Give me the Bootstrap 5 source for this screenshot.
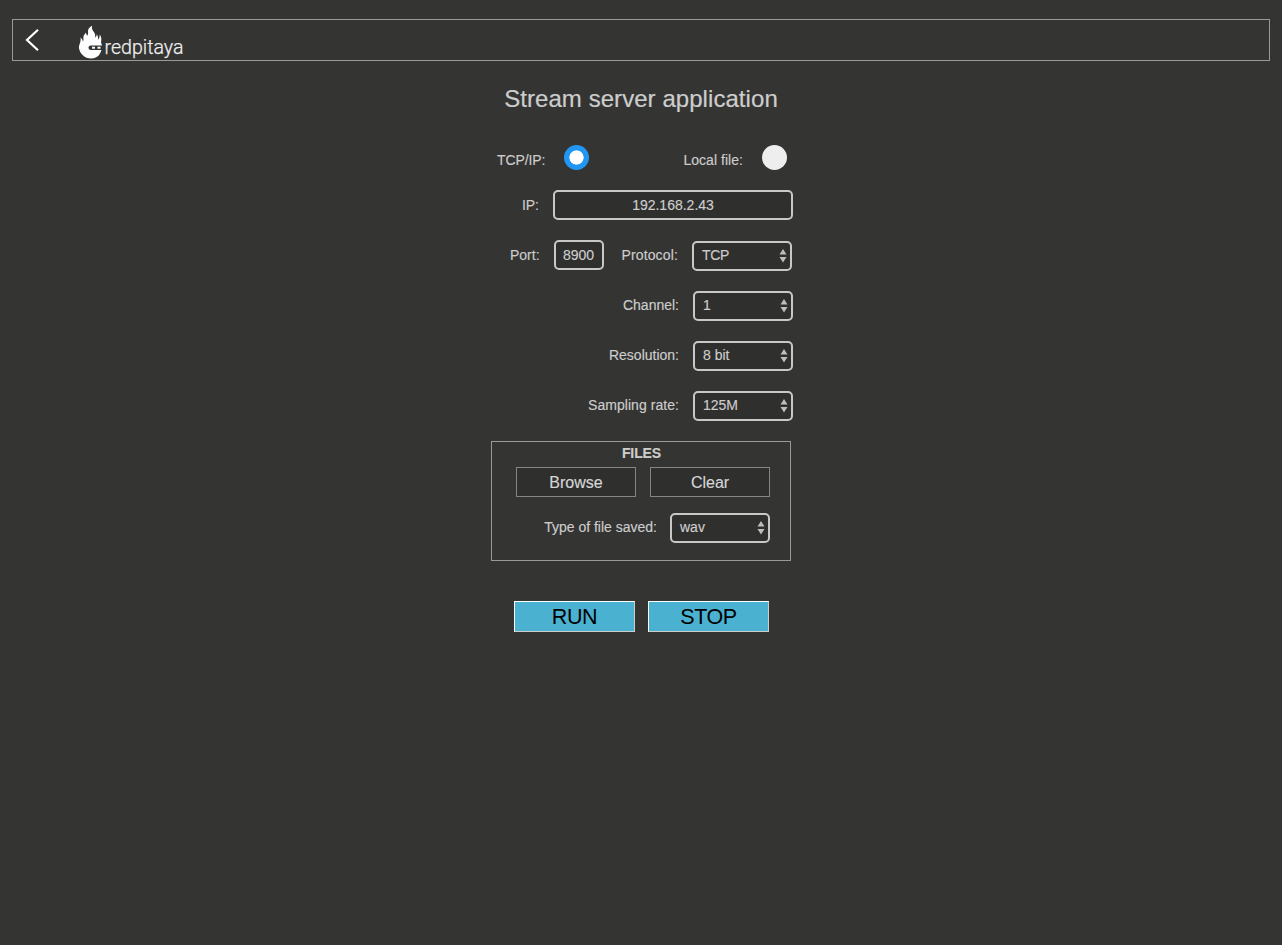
<!DOCTYPE html>
<html lang="en">
<head>
<meta charset="utf-8">
<meta name="viewport" content="width=device-width, initial-scale=1">
<title>Stream server application</title>
<link href="https://cdn.jsdelivr.net/npm/bootstrap@5.3.0/dist/css/bootstrap.min.css" rel="stylesheet">
<style>
body{background:#343432;color:#cdcdcd;font-family:"Liberation Sans",Arial,sans-serif;font-size:14px;line-height:20px;min-height:100vh}
.topbar{margin:19px 12px 0;height:42px;border:1px solid #999995}
.back{margin-left:12px}
.brand{margin-left:39px}
.brand svg{overflow:visible}
.panel{width:302px;margin-left:491px}
.title{font-size:24px;line-height:30px;margin:23px 2px 0 0;letter-spacing:.06px;font-weight:400;-webkit-text-stroke:.2px}
.modes{height:26px;margin-top:31px}
.modes label,.line,.files{-webkit-text-stroke:.15px}
.dot{width:25px;height:25px;border-radius:50%;background:#eee;border:0;margin:0;appearance:none;flex:none}
.dot:checked{background:radial-gradient(circle,#fff 0 6.8px,#2196f3 7.4px)}
.line{height:30px;margin-bottom:20px}
.field{height:30px;padding:0;border:2px solid #c8c8c6;border-radius:5px;background:#2f2f2e;color:#cdcdcd;font-size:14px;line-height:26px;text-align:center;box-shadow:none}
.pick{width:100px;height:30px;border:2px solid #c8c8c6;border-radius:5px;background:#2f2f2e;padding:0 3px 0 8px;line-height:24px}
.pick svg{margin-top:1px}
.files{width:300px;height:120px;border:1px solid #999995;margin-top:21px}
.files-head{font-size:14px;line-height:16px;margin:3px 0 0 1px;letter-spacing:-.1px}
.flat{width:120px;height:30px;border:1px solid #858583;border-radius:0;background:#2f2f2e;color:#d6d6d6;font-size:16px;line-height:29px;padding:0}
.act{width:121px;height:31px;border:1px solid;border-color:#fff #ccc #ccc #fff;border-radius:0;background:#4ab2d0;color:#000;font-size:21.500px;line-height:31px;letter-spacing:-.4px;padding:0}
</style>
</head>
<body>
<header class="d-flex flex-column">
<nav class="topbar d-flex">
<a class="back d-block" href="#" aria-label="Back"><svg class="d-block" width="15" height="40" viewBox="0 0 15 40"><path d="M13 9.8 2 20 13 30.2" fill="none" stroke="#fff" stroke-width="2.2"/></svg></a>
<a class="brand d-block" href="#"><svg class="d-block" width="108" height="40" viewBox="79 20 108 40">
<path d="M80.600 37.500c1.500 1.200 2 2.300 2.200 4 .7-.7.700-1.500.6-2.500-.4-3 1-4.600 2.600-6.500.2 1.500.5 2.300 1.200 3.200 1-1.300 1-2.400.8-3.900-.3-2.700 1.500-4.800 4.200-6-.8 2.700.2 4.200 1.500 6 1.300 1.700 1.900 3.400 1.400 5.700 1.300-.7 1.600-1.700 1.500-3.300 1.700 2 1.700 3.600 1.200 5.600 1.500-1 2-2.700 1.800-5.200 1.800 2.200 1.900 4.200 1.600 6.200-.2 1.600-.2 2.400.6 3.600l.2 2c-.3 7-4.400 12-10.500 12-7 0-11.800-5-12.500-10.500-.4-3 2.100-5 1.600-10.400Z" fill="#fff"/>
<path d="M91 45.500H102.500v4.500H91q-2.600 0-2.600-2.250t2.600-2.250Z" fill="#343432"/><rect x="92" y="46.700" width="3" height="2" fill="#fff"/><rect x="97.500" y="46.700" width="3" height="2" fill="#fff"/>
<text x="104.500" y="54" textLength="79" lengthAdjust="spacingAndGlyphs" font-family="Roboto,sans-serif" font-weight="300" font-size="20.500" fill="#eee" stroke="#eee" stroke-width=".25">redpitaya</text></svg></a>
</nav>
</header>
<main class="panel">
<h1 class="title text-center">Stream server application</h1>
<div class="modes d-flex">
<label for="net" style="letter-spacing:-.1px;margin:5px 19px 0 6px">TCP/IP:</label><input class="dot" type="radio" id="net" name="mode" checked>
<label class="ms-auto" for="loc" style="letter-spacing:.04px;margin:5px 19px 0 0">Local file:</label><input class="dot" type="radio" id="loc" name="mode" style="margin-right:6px">
</div>
<form style="margin-top:19px">
<div class="line d-flex align-items-center justify-content-end"><label for="ip" style="margin-right:14px">IP:</label><input class="field form-control" style="width:240px" id="ip" value="192.168.2.43"></div>
<div class="line d-flex align-items-center">
<label for="port" style="margin:0 14px 0 19px">Port:</label><input class="field form-control" style="width:50px" id="port" value="8900">
<label class="ms-auto" style="margin-right:14px;letter-spacing:.15px">Protocol:</label><div class="pick d-flex justify-content-between" style="margin:2px 1px 0 0"><span style="letter-spacing:-.3px">TCP</span><svg width="8" height="24" viewBox="0 0 8 24"><path d="M0.500 10.500 4 5l3.500 5.500zM.5 13 4 18.500 7.500 13z" fill="#bdbdbb"/></svg></div>
</div>
<div class="line d-flex justify-content-end"><label style="margin:5px 14px 0 0">Channel:</label><div class="pick d-flex justify-content-between" style="margin-top:1px"><span>1</span><svg width="8" height="24" viewBox="0 0 8 24"><path d="M0.500 10.500 4 5l3.500 5.500zM.5 13 4 18.500 7.500 13z" fill="#bdbdbb"/></svg></div></div>
<div class="line d-flex justify-content-end"><label style="margin:5px 14px 0 0">Resolution:</label><div class="pick d-flex justify-content-between" style="margin-top:1px"><span>8 bit</span><svg width="8" height="24" viewBox="0 0 8 24"><path d="M0.500 10.500 4 5l3.500 5.500zM.5 13 4 18.500 7.500 13z" fill="#bdbdbb"/></svg></div></div>
<div class="line d-flex justify-content-end"><label style="margin:5px 14px 0 0;letter-spacing:.05px">Sampling rate:</label><div class="pick d-flex justify-content-between" style="margin-top:1px"><span>125M</span><svg width="8" height="24" viewBox="0 0 8 24"><path d="M0.500 10.500 4 5l3.500 5.500zM.5 13 4 18.500 7.500 13z" fill="#bdbdbb"/></svg></div></div>
<section class="files d-flex flex-column">
<div class="files-head text-center fw-bold">FILES</div>
<div class="d-flex" style="gap:14px;margin:6px 0 0 24px"><button type="button" class="btn flat">Browse</button><button type="button" class="btn flat">Clear</button></div>
<div class="d-flex justify-content-end" style="margin:16px 20px 0 0"><label style="margin:4px 13px 0 0">Type of file saved:</label><div class="pick d-flex justify-content-between"><span>wav</span><svg width="8" height="24" viewBox="0 0 8 24"><path d="M0.500 10.500 4 5l3.500 5.500zM.5 13 4 18.500 7.500 13z" fill="#bdbdbb"/></svg></div></div>
</section>
<div class="d-flex" style="gap:13px;margin:40px 0 0 23px"><button type="button" class="btn act">RUN</button><button type="button" class="btn act">STOP</button></div>
</form>
</main>
<script src="https://cdn.jsdelivr.net/npm/bootstrap@5.3.0/dist/js/bootstrap.bundle.min.js"></script>
</body>
</html>
